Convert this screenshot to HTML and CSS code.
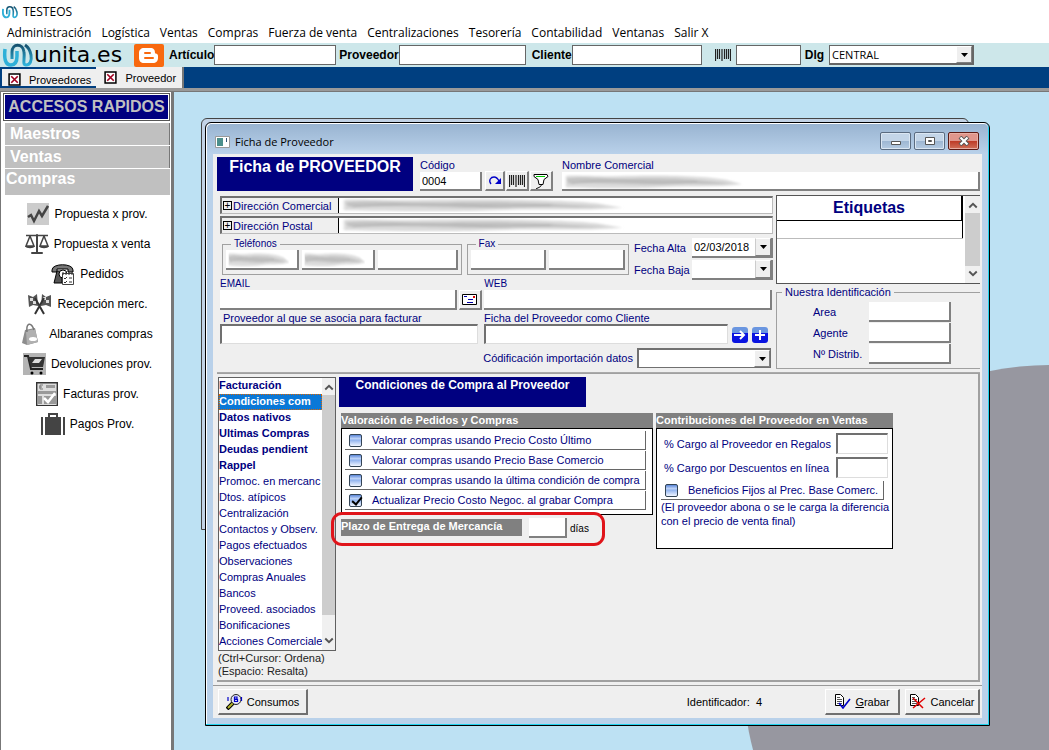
FILE: index.html
```html
<!DOCTYPE html>
<html lang="es">
<head>
    <meta charset="UTF-8">
    <title>TESTEOS</title>
    <link rel="stylesheet" href="styles.css">
</head>
<body>
<svg width="0" height="0" class="defs">
    <defs>
        <linearGradient id="gLogo" x1="0" y1="0" x2="0" y2="1">
            <stop offset="0" stop-color="#14506e"/>
            <stop offset="1" stop-color="#2fb4dc"/>
        </linearGradient>
        <filter id="soft" x="-5%" y="-20%" width="110%" height="140%"><feGaussianBlur stdDeviation="1"/></filter>
        <symbol id="logo" viewBox="0 0 30 24">
            <path d="M2 6c-1 9 0 16 6 16 5 0 6-4 6-9V8" fill="none" stroke="#2fb0d8" stroke-width="3.500"/>
            <path d="M9 16V9c0-9 11-9 12 0 1 7-2 13 2 13s6-4 5-10-3-8-6-10" fill="none" stroke="url(#gLogo)" stroke-width="3"/>
        </symbol>
        <symbol id="close" viewBox="0 0 12 12">
            <path d="M1 1h10v10H1z" fill="#fff" stroke="#000" stroke-width="1.400"/>
            <path d="M3 3l6 6M9 3l-6 6" stroke="#a00020" stroke-width="1.500"/>
        </symbol>
        <symbol id="bars" viewBox="0 0 16 12">
            <path d="M.5 0v12M2.500 0v10M4.500 0v10M7 0v12M9.500 0v10M11.500 0v10M13.500 0v10M15.500 0v12" stroke="#222" stroke-width="1.200"/>
        </symbol>
        <symbol id="down" viewBox="0 0 7 4"><path d="M0 0h7L3.500 4z"/></symbol>
        <symbol id="chevUp" viewBox="0 0 8 6"><path d="M1 5l3-3 3 3" fill="none" stroke="#555" stroke-width="1.500"/></symbol>
        <symbol id="chevDown" viewBox="0 0 8 6"><path d="M1 1l3 3 3-3" fill="none" stroke="#555" stroke-width="1.500"/></symbol>
        <symbol id="smudge" viewBox="0 0 200 16" preserveAspectRatio="none">
            <g filter="url(#soft)">
                <path d="M2 2c10-1 30 1 60 0s90-1 118 4l18 5c-30 4-60 1-90 3s-80 1-106 0z" fill="#dcdcdc"/>
                <path d="M3 5c20-3 40 1 70 0s60 0 80 2l34 3c-30 2-40-1-70 1s-60-2-112-1z" fill="#c2c2c2"/>
                <path d="M8 10c20-2 40-4 60-3s50 4 80 1" fill="none" stroke="#adadad"/>
            </g>
        </symbol>
    </defs>
</svg>

<header class="titlebar">
    <svg width="16" height="14"><use href="#logo"/></svg>
    <span>TESTEOS</span>
</header>
<nav class="menu">
    <a href="#">Administración</a>
    <a href="#">Logística</a>
    <a href="#">Ventas</a>
    <a href="#">Compras</a>
    <a href="#">Fuerza de venta</a>
    <a href="#">Centralizaciones</a>
    <a href="#">Tesorería</a>
    <a href="#">Contabilidad</a>
    <a href="#">Ventanas</a>
    <a href="#">Salir X</a>
</nav>

<div class="toolbar">
    <svg class="brand-mark" width="32" height="24"><use href="#logo"/></svg>
    <span class="brand">unita.es</span>
    <svg class="blogger" width="30" height="23" viewBox="0 0 30 23">
        <rect width="30" height="23" rx="2" fill="#f8690f"/>
        <path d="M10 4h6c4 0 5 2 5 5 0 1 3 0 3 3v2c0 3-2 5-5 5h-9c-3 0-5-2-5-5V9c0-3 2-5 5-5z" fill="#fff"/>
        <path d="M11 9h5M11 14h8" stroke="#f8690f" stroke-width="2" stroke-linecap="round"/>
    </svg>
    <label for="articulo">Artículo</label><input id="articulo" class="w-art">
    <label for="proveedor">Proveedor</label><input id="proveedor" class="w-prov">
    <label for="cliente">Cliente</label><input id="cliente" class="w-cli">
    <svg class="bars" width="16" height="12"><use href="#bars"/></svg>
    <input id="barras" class="w-bar" aria-label="Código de barras">
    <label for="dlg">Dlg</label>
    <div class="combo dlg">
        <select id="dlg"><option>CENTRAL</option></select>
        <span class="arrow"><svg width="7" height="4"><use href="#down"/></svg></span>
    </div>
</div>

<div class="tabs">
    <button class="tab"><svg width="13" height="13"><use href="#close"/></svg>Proveedores</button>
    <button class="tab active"><svg width="13" height="13"><use href="#close"/></svg>Proveedor</button>
</div>

<div class="work">
    <aside class="sidebar">
        <h1>ACCESOS RAPIDOS</h1>
        <button class="group">Maestros</button>
        <button class="group">Ventas</button>
        <button class="group open">Compras</button>
        <ul>
            <li><a href="#">
                <svg width="22" height="22" viewBox="0 0 22 22"><rect width="22" height="22" fill="#ccc"/><path d="M1 14l3-2 3 6 5-10 3 5 6-10" fill="none" stroke="#444" stroke-width="2.500"/></svg>
                Propuesta x prov.</a></li>
            <li><a href="#">
                <svg width="24" height="22" viewBox="0 0 24 22"><path d="M1 2.500h22M12 1v19M6 20h12M5 3L1 13h8L5 3M19 3l-4 10h8L19 3" fill="none" stroke="#444" stroke-width="1.500"/><path d="M0 13h10c-1 3-9 3-10 0M14 13h10c-1 3-9 3-10 0M7 19h10v2H7zM11 2h2v18h-2z" fill="#444"/></svg>
                Propuesta x venta</a></li>
            <li><a href="#">
                <svg width="24" height="22" viewBox="0 0 24 22"><path d="M1 7c0-7 21-7 21 0v2h-5V6H6v3H1z" fill="#777" stroke="#000"/><path d="M6 8l-3 12h8V8z" fill="#555" stroke="#000"/><circle cx="12" cy="11" r="4" fill="#fff" stroke="#000"/><path d="M11.500 10.500h11v11h-11z" fill="#fff" stroke="#444"/><path d="M12 9v3M15 9v3M18 9v3M21 9v3M13 15l1 1 2-2M18 15h3M13 19l1 1 2-2M18 19h3" fill="none" stroke="#333"/></svg>
                Pedidos</a></li>
            <li><a href="#">
                <svg width="25" height="22" viewBox="0 0 25 22"><path d="M1 2l5 2 4-3 1 12-5-1-4 2zM24 2l-5 2-4-3-1 12 5-1 5 2z" fill="#555"/><path d="M3 5h3v3H3zM6 8h3v3H6zM16 4h3v3h-3zM19 7h3v3h-3z" fill="#ddd"/><path d="M8 21l9-16M17 21L8 5" stroke="#333" stroke-width="2"/></svg>
                Recepción merc.</a></li>
            <li><a href="#">
                <svg class="bag" width="16" height="22" viewBox="0 0 16 22"><path d="M3 7l10-2 3 14-11 3-5-2z" fill="#8d8d8d"/><path d="M4 8l9-2 3 13-11 3z" fill="#b0b0b0"/><path d="M5 9c-1-9 4-11 7-2" fill="none" stroke="#777" stroke-width="1.500"/><ellipse cx="11" cy="16" rx="4" ry="2" fill="#fff"/></svg>
                Albaranes compras</a></li>
            <li><a href="#">
                <svg width="23" height="22" viewBox="0 0 23 22"><rect width="23" height="22" fill="#b4b4b4"/><path d="M1 3h4l3 13h12" fill="none" stroke="#222" stroke-width="2"/><path d="M5 4h17l-2 10H8z" fill="#333"/><path d="M9 10l3-4h7l-3 4z" fill="#ddd"/><circle cx="9" cy="20" r="1.500"/><circle cx="18" cy="20" r="1.500"/></svg>
                Devoluciones prov.</a></li>
            <li><a href="#">
                <svg width="22" height="24" viewBox="0 0 22 24"><path d="M.7.7h20.600v23H.7z" fill="#ddd" stroke="#333" stroke-width="1.400"/><path d="M10 3h9v3h-9zM2 9h18v3H2zM2 14h4v8H2zM8 14h12v8H8z" fill="#999"/><path d="M7 3H4v4h3M3 5h3" fill="none" stroke="#777"/><path d="M8 16l4 4 7-9" fill="none" stroke="#fff" stroke-width="2.500"/></svg>
                Facturas prov.</a></li>
            <li><a href="#">
                <svg width="24" height="22" viewBox="0 0 24 22"><path d="M0 4h2v18H0zM22 4h2v18h-2zM4 4h16v18H4z" fill="#444"/><path d="M8 5V1h8v4" fill="none" stroke="#444" stroke-width="2"/></svg>
                Pagos Prov.</a></li>
        </ul>
    </aside>

    <main class="desk">
        <div class="planet"></div>
        <div class="window-back"></div>
        <section class="window">
            <div class="caption">
                <svg width="15" height="12" viewBox="0 0 15 12"><path d="M.5.5h14v11H.5z" fill="#fff" stroke="#999"/><path d="M2 2h6v8H2z" fill="#4b8f8c"/><path d="M11.500 2v4" stroke="#357"/></svg>
                <h2>Ficha de Proveedor</h2>
                <button aria-label="Minimizar"><svg width="12" height="10" viewBox="0 0 12 10"><path d="M1.500 5.500h9v3h-9z" fill="#fff" stroke="#555"/></svg></button>
                <button aria-label="Maximizar"><svg width="12" height="10" viewBox="0 0 12 10"><path d="M1.500 1.500h9v7h-9z" fill="#fff" stroke="#555"/><path d="M4.500 4.500h3v1h-3z" stroke="#555" fill="none"/></svg></button>
                <button class="x" aria-label="Cerrar"><svg width="12" height="10" viewBox="0 0 12 10"><path d="M2 1l8 8M10 1L2 9" stroke="#555" stroke-width="4"/><path d="M2.500 1.500l7 7M9.500 1.500l-7 7" stroke="#fff" stroke-width="2.200"/></svg></button>
            </div>

            <form class="sheet">
                <div class="head">
                    <h3>Ficha de PROVEEDOR</h3>
                    <div class="field codigo">
                        <label for="codigo">Código</label>
                        <input id="codigo" class="flat" value="0004">
                    </div>
                    <button type="button" class="tool" aria-label="Recargar"><svg width="14" height="10" viewBox="0 0 14 10"><path d="M3 8C0 4 3 1 6 1c3 0 4 2 5 4" fill="none" stroke="#0000c8" stroke-width="1.300"/><path d="M13 2v6H7z" fill="#0000c8"/></svg></button>
                    <button type="button" class="tool wide" aria-label="Códigos de barras"><svg width="16" height="12"><use href="#bars"/></svg></button>
                    <button type="button" class="tool wide" aria-label="Lector"><svg width="18" height="16" viewBox="0 0 18 16"><path d="M2 1.500h13l1 2-4 3-1 5H7L6 6.500l-4-3z" fill="#fff" stroke="#000"/><path d="M4 3.500h9" stroke="#0c0"/><path d="M9 11c1 3-2 3-5 5" fill="none" stroke="#000"/></svg></button>
                    <div class="field nombre">
                        <label for="nombre">Nombre Comercial</label>
                        <div class="smudged"><input id="nombre" class="flat"><svg class="s-name"><use href="#smudge"/></svg></div>
                    </div>
                </div>

                <div class="columns">
                    <div class="left">
                        <div class="address">
                            <label for="dirc"><i>+</i>Dirección Comercial</label>
                            <div class="smudged"><input id="dirc"><svg class="s-addr"><use href="#smudge"/></svg></div>
                        </div>
                        <div class="address">
                            <label for="dirp"><i>+</i>Dirección Postal</label>
                            <div class="smudged"><input id="dirp"><svg class="s-addr"><use href="#smudge"/></svg></div>
                        </div>
                        <div class="phones">
                            <fieldset class="tel">
                                <legend>Teléfonos</legend>
                                <div class="inputs">
                                    <div class="smudged"><input class="flat" aria-label="Teléfono 1"><svg class="s-tel"><use href="#smudge"/></svg></div>
                                    <div class="smudged"><input class="flat" aria-label="Teléfono 2"><svg class="s-tel"><use href="#smudge"/></svg></div>
                                    <input class="flat" aria-label="Teléfono 3">
                                </div>
                            </fieldset>
                            <fieldset class="fax">
                                <legend>Fax</legend>
                                <div class="inputs">
                                    <input class="flat" aria-label="Fax 1">
                                    <input class="flat" aria-label="Fax 2">
                                </div>
                            </fieldset>
                            <div class="dates">
                                <label for="alta">Fecha Alta</label>
                                <div class="combo flat"><select id="alta"><option>02/03/2018</option></select><span class="arrow"><svg width="7" height="4"><use href="#down"/></svg></span></div>
                                <label for="baja">Fecha Baja</label>
                                <div class="combo flat"><select id="baja"><option></option></select><span class="arrow"><svg width="7" height="4"><use href="#down"/></svg></span></div>
                            </div>
                        </div>
                        <div class="line mail">
                            <div class="field half"><label for="email">EMAIL</label><input id="email" class="flat"></div>
                            <button type="button" class="tool wide" aria-label="Enviar correo"><svg width="16" height="12" viewBox="0 0 16 12"><path d="M.5.5h14v10H.5z" fill="#fff" stroke="#000"/><path d="M2 2.500h3M6 5.500h5M5 8.500h6" stroke="#00a"/><path d="M11 2h2v2h-2z" fill="#d00"/></svg></button>
                            <div class="field"><label for="web">WEB</label><input id="web" class="flat"></div>
                        </div>
                        <div class="line assoc">
                            <div class="field first"><label for="asocia">Proveedor al que se asocia para facturar</label><input id="asocia"></div>
                            <div class="field"><label for="comocli">Ficha del Proveedor como Cliente</label><input id="comocli"></div>
                            <button type="button" class="round" aria-label="Ir"><svg width="16" height="16" viewBox="0 0 16 16"><path d="M2 8h9M8 4l4 4-4 4" fill="none" stroke="#fff" stroke-width="2"/></svg></button>
                            <button type="button" class="round" aria-label="Añadir"><svg width="16" height="16" viewBox="0 0 16 16"><path d="M3 8h10M8 3v10" stroke="#fff" stroke-width="2"/></svg></button>
                        </div>
                        <div class="import">
                            <label for="codif">Códificación importación datos</label>
                            <div class="combo sunk"><select id="codif"><option></option></select><span class="arrow"><svg width="7" height="4"><use href="#down"/></svg></span></div>
                        </div>
                    </div>

                    <div class="right">
                        <div class="tags">
                            <table>
                                <thead><tr><th>Etiquetas</th></tr></thead>
                                <tbody><tr><td></td></tr></tbody>
                            </table>
                            <div class="scroll">
                                <svg width="10" height="8"><use href="#chevUp"/></svg>
                                <span></span>
                                <svg width="10" height="8"><use href="#chevDown"/></svg>
                            </div>
                        </div>
                        <fieldset class="ident">
                            <legend>Nuestra Identificación</legend>
                            <label for="area">Area</label><input id="area" class="flat">
                            <label for="agente">Agente</label><input id="agente" class="flat">
                            <label for="distrib">Nº Distrib.</label><input id="distrib" class="flat">
                        </fieldset>
                    </div>
                </div>

                <div class="detail">
                    <div class="sections">
                        <div class="listbox">
                            <ul>
                                <li><button type="button" class="b">Facturación</button></li>
                                <li><button type="button" class="b selected">Condiciones com</button></li>
                                <li><button type="button" class="b">Datos nativos</button></li>
                                <li><button type="button" class="b">Ultimas Compras</button></li>
                                <li><button type="button" class="b">Deudas pendient</button></li>
                                <li><button type="button" class="b">Rappel</button></li>
                                <li><button type="button">Promoc. en mercanc</button></li>
                                <li><button type="button">Dtos. atípicos</button></li>
                                <li><button type="button">Centralización</button></li>
                                <li><button type="button">Contactos y Observ.</button></li>
                                <li><button type="button">Pagos efectuados</button></li>
                                <li><button type="button">Observaciones</button></li>
                                <li><button type="button">Compras Anuales</button></li>
                                <li><button type="button">Bancos</button></li>
                                <li><button type="button">Proveed. asociados</button></li>
                                <li><button type="button">Bonificaciones</button></li>
                                <li><button type="button">Acciones Comerciale</button></li>
                            </ul>
                            <div class="scroll">
                                <svg width="10" height="8"><use href="#chevUp"/></svg>
                                <span></span>
                                <svg width="10" height="8"><use href="#chevDown"/></svg>
                            </div>
                        </div>
                        <p>(Ctrl+Cursor: Ordena)<br>(Espacio: Resalta)</p>
                    </div>

                    <div class="conditions">
                        <h4>Condiciones de Compra al Proveedor</h4>
                        <div class="boxes">
                            <div class="valor">
                                <h5>Valoración de Pedidos y Compras</h5>
                                <div class="box">
                                    <label class="check"><input type="checkbox">Valorar compras usando Precio Costo Último</label>
                                    <label class="check"><input type="checkbox">Valorar compras usando Precio Base Comercio</label>
                                    <label class="check"><input type="checkbox">Valorar compras usando la última condición de compra</label>
                                    <label class="check"><input type="checkbox" checked>Actualizar Precio Costo Negoc. al grabar Compra</label>
                                </div>
                                <div class="plazo">
                                    <label for="plazo">Plazo de Entrega de Mercancía</label>
                                    <input id="plazo" class="flat">
                                    <span>días</span>
                                </div>
                            </div>
                            <div class="contrib">
                                <h5>Contribuciones del Proveedor en Ventas</h5>
                                <div class="box">
                                    <div class="pct"><label for="regalos">% Cargo al Proveedor en Regalos</label><input id="regalos"></div>
                                    <div class="pct"><label for="dtos">% Cargo por Descuentos en línea</label><input id="dtos"></div>
                                    <label class="check"><input type="checkbox">Beneficios Fijos al Prec. Base Comerc.</label>
                                    <p>(El proveedor abona o se le carga la diferencia con el precio de venta final)</p>
                                </div>
                            </div>
                        </div>
                    </div>
                </div>

                <div class="footer">
                    <button type="button" class="push consumos"><svg width="17" height="17" viewBox="0 0 17 17"><path d="M1 16l6-6" stroke="#000" stroke-width="4"/><path d="M2 15l5-5" stroke="#b5b52a" stroke-width="2"/><circle cx="10" cy="6.500" r="5" fill="#e4e4f4" stroke="#222"/><path d="M8.500 4h2.500v2H8.500zM8.500 6.500h3v2h-3zM2 4v4M15.500 4v4" fill="none" stroke="#0000c8" stroke-width="1.200"/></svg>Consumos</button>
                    <span class="ident-no">Identificador:&nbsp; 4</span>
                    <button type="button" class="push"><svg width="17" height="15" viewBox="0 0 17 15"><path d="M1.500.5h5l3 3v8h-8z" fill="#fff" stroke="#000"/><path d="M3 3.500h3M3 5.500h5M3 7.500h5M3 9.500h5" stroke="#555"/><path d="M5 9l4 5 7-9" fill="none" stroke="#0000c8" stroke-width="1.600"/></svg><span><u>G</u>rabar</span></button>
                    <button type="button" class="push"><svg width="17" height="15" viewBox="0 0 17 15"><path d="M1.500.5h5l3 3v8h-8z" fill="#fff" stroke="#000"/><path d="M3 3.500h3M3 5.500h5M3 7.500h5M3 9.500h5" stroke="#555"/><path d="M4 4l10 10M16 4L4 14" stroke="#e00000" stroke-width="1.500"/></svg>Cancelar</button>
                </div>
            </form>
        </section>
    </main>
</div>
</body>
</html>
```
FILE: styles.css
```css
*{
    box-sizing: border-box;
    margin: 0px;
    padding: 0px;
}
body{
    min-height: 100vh;
    display: flex;
    flex-direction: column;
    background: #fff;
    font: 11px/14px "Liberation Sans", sans-serif;
    color: #000;
    overflow: hidden;
}
ul{
    list-style: none;
}
a{
    color: inherit;
    text-decoration: none;
}
button, input, select{
    font: inherit;
    color: inherit;
    border: none;
    border-radius: 0px;
}
input{
    min-width: 0px;
    width: 100%;
    height: 20px;
    background: #fff;
    padding: 0px 2px;
    color: #000;
}
svg{
    display: block;
    flex: none;
}
.defs{
    position: absolute;
}

/* top bars */
.titlebar{
    display: flex;
    align-items: center;
    gap: 5px;
    height: 24px;
    padding-left: 2px;
    font: 12px/16px "Open Sans", sans-serif;
}
.menu{
    display: flex;
    gap: 10px;
    height: 19px;
    padding-left: 7px;
    font: 12px/18px "Open Sans", sans-serif;
    white-space: nowrap;
}
.toolbar{
    display: flex;
    align-items: center;
    height: 24px;
    padding-left: 2px;
    background: #cde7ea;
    font-weight: bold;
}
.toolbar input{
    border: 1px solid #666;
}
.toolbar .brand{
    width: 97px;
    font: 22px/22px "DejaVu Sans", sans-serif;
}
.toolbar .blogger{
    margin: 0px 5px 0px 3px;
}
.toolbar label{
    font-size: 12px;
    white-space: nowrap;
}
.toolbar .w-art{
    width: 122px;
    margin-right: 3px;
}
.toolbar .w-prov{
    width: 127px;
    margin-right: 6px;
}
.toolbar .w-cli{
    width: 130px;
}
.toolbar .bars{
    margin: 0px 5px 0px 13px;
}
.toolbar .w-bar{
    width: 65px;
    margin-right: 4px;
}
.combo{
    display: flex;
    height: 20px;
    background: #fff;
}
.combo select{
    appearance: none;
    flex: 1;
    min-width: 0px;
    padding-left: 2px;
    background: transparent;
    color: #000;
}
.combo .arrow{
    display: flex;
    align-items: center;
    justify-content: center;
    width: 16px;
    background: #efefef;
    border: 1px solid #fff;
    border-right-color: #808080;
    border-bottom-color: #808080;
}
.combo.flat{
    border-right: 2px solid #808080;
    border-bottom: 2px solid #808080;
}
.combo.flat .arrow{
    border-left-color: #ccc;
}
.combo.sunk{
    border: 1px solid #707070;
    border-width: 2px 1px 1px 2px;
}
.combo.dlg{
    width: 145px;
    margin-left: 5px;
    border: 1px solid #666;
    border-width: 1px 2px 2px 1px;
    font: 11px/14px "Open Sans", sans-serif;
}
.tabs{
    display: flex;
    align-items: flex-start;
    height: 24px;
    padding-left: 2px;
    background: #003f80;
    border-bottom: 3px solid #999;
}
.tab{
    display: flex;
    align-items: center;
    gap: 8px;
    height: 17px;
    margin-top: 2px;
    padding: 4px 5px 0px 6px;
    background: #efefef;
}
.tab.active{
    height: 21px;
    margin-top: 0px;
    padding: 0px 6px 0px 8px;
    border-right: 2px solid #777;
}

.work{
    flex: 1;
    display: flex;
}

/* left panel */
.sidebar{
    width: 174px;
    padding: 2px 1px 0px 4px;
    border: 1px solid #777;
    border-width: 1px 3px 0px 1px;
}
.sidebar h1{
    height: 26px;
    margin: 0px 1px 3px -1px;
    border: 1px solid #fff;
    outline: 1px solid #555;
    background: #000080;
    color: #c0c0c0;
    text-align: center;
    font: bold 16px/24px "Liberation Sans", sans-serif;
    white-space: nowrap;
}
.sidebar .group{
    display: block;
    width: 100%;
    height: 22px;
    margin-bottom: 1px;
    padding-left: 5px;
    background: #c0c0c0;
    border-right: 1px solid #777;
    color: #fff;
    text-align: left;
    font: bold 16px/22px "Liberation Sans", sans-serif;
}
.sidebar .group.open{
    height: 26px;
    margin-bottom: 4px;
    padding: 0px 0px 6px 1px;
    border-right: none;
    line-height: 20px;
}
.sidebar li a{
    display: flex;
    align-items: center;
    justify-content: center;
    gap: 5px;
    height: 30px;
    font-size: 12px;
}
.sidebar .bag{
    margin-right: 6px;
}

/* desktop */
.desk{
    flex: 1;
    position: relative;
    overflow: hidden;
    background: #bde1f3;
    border-top: 1px solid #777;
}
.planet{
    position: absolute;
    left: 569px;
    top: 273px;
    width: 614px;
    height: 614px;
    border-radius: 50%;
    background: #9797a0;
}
.window-back{
    position: absolute;
    left: 27px;
    right: 80px;
    top: 26px;
    height: 412px;
    border: 1px solid #444;
    border-radius: 6px 6px 0px 0px;
    background: #c3d3e6;
}
.window{
    position: absolute;
    left: 31px;
    right: 59px;
    top: 30px;
    padding: 0px 7px 7px;
    border: 1px solid #000;
    border-radius: 6px 6px 0px 0px;
    box-shadow: inset -1px -1px 0px #22d3ee, inset 1px 1px 0px #fff;
    background: #b9d1ea;
}
.caption{
    display: flex;
    align-items: center;
    gap: 3px;
    height: 30px;
    margin: 1px -6px 0px;
    padding: 0px 9px 0px 8px;
    border-radius: 5px 5px 0px 0px;
    background: linear-gradient(#99b4d1, #b9d1ea);
}
.caption h2{
    flex: 1;
    margin-left: 2px;
    padding-top: 6px;
    font: 11px/16px "Open Sans", sans-serif;
}
.caption > svg{
    margin-top: 6px;
}
.caption button{
    display: flex;
    align-items: center;
    justify-content: center;
    width: 31px;
    height: 18px;
    margin-top: 4px;
    border: 1px solid #5a6b80;
    border-radius: 2px;
    background: linear-gradient(#c3d5e8 50%, #9db6d2 50%, #b5cbe2);
    box-shadow: inset 0px 0px 0px 1px #dbe7f3;
}
.caption button.x{
    border-color: #5c1a14;
    background: linear-gradient(#e0968c 50%, #bd3a26 50%, #d0705a);
    box-shadow: inset 0px 0px 0px 1px #e8b0a5;
}
.sheet{
    padding: 3px 2px 3px 4px;
    background: #efefef;
    color: #000080;
}

/* fields */
input.flat{
    border-right: 2px solid #808080;
    border-bottom: 2px solid #808080;
}
.field{
    display: flex;
    flex-direction: column;
    flex: 1;
}
.smudged{
    position: relative;
    flex: 1;
    display: flex;
}
.smudged svg{
    position: absolute;
    left: 2px;
    top: 2px;
    height: 15px;
}
.smudged .s-name{
    width: 180px;
}
.smudged .s-addr{
    width: 284px;
}
.smudged .s-tel{
    width: 62px;
}
.tool{
    display: flex;
    align-items: center;
    justify-content: center;
    width: 20px;
    height: 20px;
    background: #efefef;
    border: 1px solid #fff;
    border-right: 2px solid #808080;
    border-bottom: 2px solid #808080;
}
.tool.wide{
    width: 23px;
}
.head{
    display: flex;
    align-items: flex-end;
    height: 34px;
}
.head h3{
    align-self: stretch;
    width: 196px;
    margin-right: 7px;
    background: #000080;
    color: #fff;
    text-align: center;
    font: bold 16px/20px "Liberation Sans", sans-serif;
}
.head label{
    line-height: 13px;
}
.head input{
    height: 19px;
}
.head .codigo{
    flex: none;
    width: 62px;
    margin-right: 3px;
}
.head .tool{
    margin-right: 1px;
}
.head .nombre{
    margin-left: 8px;
}
.columns{
    display: flex;
    gap: 3px;
    height: 182px;
    padding-top: 4px;
    border-bottom: 1px solid #aaa;
}
.left{
    flex: 1;
    padding: 1px 0px 0px 3px;
}
.address{
    display: flex;
    height: 18px;
    margin-bottom: 2px;
    border: 1px solid #bbb;
    border-width: 2px 1px 1px 2px;
    border-top-color: #707070;
    border-left-color: #707070;
}
.address label{
    display: flex;
    align-items: center;
    gap: 1px;
    width: 117px;
    padding-left: 1px;
    border-right: 1px solid #000;
    white-space: nowrap;
}
.address i{
    width: 9px;
    height: 9px;
    border: 1px solid #000;
    color: #000;
    font: 10px/7px "Liberation Sans", sans-serif;
    text-align: center;
}
.address input{
    height: 15px;
}
.address .smudged svg{
    top: 0px;
    height: 14px;
}
.phones{
    display: flex;
    align-items: flex-start;
    padding-top: 2px;
}
fieldset{
    min-width: 0px;
    border: 1px solid #a0a0a0;
}
legend{
    margin-left: 5px;
    padding: 0px 3px;
    line-height: 14px;
}
.tel, .fax{
    height: 37px;
    padding: 0px 3px;
    font-size: 10px;
}
.tel legend, .fax legend{
    line-height: 12px;
}
.tel{
    flex: 3;
    margin: 0px 5px 0px 2px;
}
.fax{
    flex: 2;
    margin-right: 5px;
}
.phones .inputs{
    display: flex;
    gap: 3px;
}
.phones .inputs > *{
    flex: 1 1 0px;
    width: 0px;
}
.dates{
    display: grid;
    grid-template-columns: 58px 81px;
    gap: 2px 0px;
    align-items: center;
    white-space: nowrap;
}
.line{
    display: flex;
    align-items: flex-end;
}
.line label{
    height: 12px;
    line-height: 12px;
}
.mail{
    gap: 2px;
    margin: -2px 1px 0px 0px;
    font-size: 10px;
}
.mail .half{
    flex: none;
    width: 43%;
}
.assoc{
    gap: 4px;
    margin: 2px 5px 0px 0px;
}
.assoc .first{
    flex: none;
    width: 258px;
    margin-right: 2px;
}
.assoc .first label{
    padding-left: 3px;
}
.assoc input{
    border: 1px solid #ddd;
    border-width: 2px 1px 1px 2px;
    border-top-color: #707070;
    border-left-color: #707070;
}
.round{
    width: 16px;
    height: 16px;
    margin-bottom: 1px;
    border-radius: 3px;
    background: linear-gradient(#6a96e0 40%, #0a14e0 40%);
}
.import{
    display: flex;
    align-items: center;
    justify-content: flex-end;
    gap: 4px;
    margin: 4px 2px 0px 0px;
}
.import .combo{
    width: 134px;
}
.right{
    width: 204px;
}
.tags{
    display: flex;
    height: 89px;
    border: 1px solid #555;
    border-right: none;
    background: #fff;
}
.tags table{
    flex: 1;
    align-self: flex-start;
    border-collapse: collapse;
}
.tags th{
    height: 24px;
    border-right: 2px solid #000;
    border-bottom: 1px solid #000;
    font-size: 16px;
}
.tags td{
    height: 18px;
    border-right: 1px solid #000;
    border-bottom: 1px solid #bbb;
}
.scroll{
    display: flex;
    flex-direction: column;
    align-items: center;
    width: 15px;
    padding: 5px 0px;
    background: #f0f0f0;
}
.scroll span{
    flex: 1;
    align-self: stretch;
    margin: 4px 0px;
    background: #cdcdcd;
}
.tags .scroll{
    margin-left: 2px;
}
.ident{
    display: grid;
    grid-template-columns: 56px 82px;
    gap: 1px 0px;
    align-items: center;
    justify-content: end;
    margin-top: 1px;
    padding: 3px 29px 4px 0px;
    border-right: none;
}

/* detail */
.detail{
    display: flex;
    gap: 3px;
    height: 309px;
    padding: 3px 0px 0px 1px;
    border: 1px solid #a0a0a0;
    border-width: 1px 2px 2px 0px;
}
.sections{
    width: 118px;
    color: #222;
    line-height: 13px;
}
.listbox{
    display: flex;
    height: 274px;
    margin-bottom: 1px;
    border: 1px solid #606060;
    background: #fff;
}
.listbox ul{
    flex: 1;
    min-width: 0px;
}
.listbox button{
    display: block;
    width: 100%;
    height: 16px;
    padding-bottom: 2px;
    background: none;
    color: #000080;
    text-align: left;
    line-height: 14px;
    white-space: nowrap;
}
.listbox .b{
    font-weight: bold;
}
.listbox button.selected{
    background: #0a78d7;
    color: #fff;
    outline: 1px dotted #d60;
    outline-offset: -1px;
}
.listbox .scroll{
    width: 13px;
}
.listbox .scroll span{
    margin-bottom: 22px;
}
h4{
    width: 247px;
    height: 30px;
    margin-bottom: 6px;
    background: #000080;
    color: #fff;
    text-align: center;
    font-size: 12px;
    line-height: 16px;
}
h5{
    height: 15px;
    background: #808080;
    color: #fff;
    font-size: 11px;
    line-height: 15px;
    white-space: nowrap;
}
.boxes{
    display: flex;
    align-items: flex-start;
    gap: 3px;
    padding-left: 2px;
}
.valor{
    width: 312px;
}
.contrib{
    width: 237px;
}
.box{
    border: 1px solid #000;
    background: #fff;
}
.valor .box{
    display: grid;
    gap: 1px;
    align-content: start;
    height: 87px;
    padding: 2px 6px 0px 3px;
}
.check{
    display: flex;
    align-items: center;
    gap: 10px;
    height: 19px;
    padding-left: 4px;
    border-right: 1px solid #666;
    border-bottom: 1px solid #666;
    white-space: nowrap;
}
.check input{
    appearance: none;
    position: relative;
    width: 13px;
    height: 13px;
    border: 1px solid #345;
    border-radius: 2px;
    background: linear-gradient(#5a86d8, #c4d8fa 35%, #8fb2ee 45%, #f0f5ff);
}
.check input:checked::after{
    content: "";
    position: absolute;
    left: 4px;
    top: 0px;
    width: 4px;
    height: 8px;
    border: solid #000;
    border-width: 0px 2px 2px 0px;
    transform: rotate(40deg);
}
.plazo{
    display: flex;
    align-items: center;
    width: 274px;
    height: 34px;
    margin: -3px 0px 0px -10px;
    padding-left: 7px;
    position: relative;
    border: 3px solid #e0141a;
    border-radius: 11px;
    color: #000;
    font-size: 10px;
}
.plazo label{
    width: 181px;
    height: 17px;
    margin: 0px 7px 4px 0px;
    background: #808080;
    color: #fff;
    font-size: 11px;
    font-weight: bold;
    line-height: 15px;
}
.plazo input{
    width: 38px;
    margin: 0px 3px 3px 0px;
}
.contrib .box{
    height: 121px;
    padding: 4px 4px 0px;
}
.pct{
    display: flex;
    align-items: center;
    justify-content: space-between;
    margin-bottom: 3px;
    padding-left: 3px;
}
.pct input{
    width: 52px;
    height: 21px;
    border: 1px solid #ddd;
    border-width: 2px 1px 1px 2px;
    border-top-color: #707070;
    border-left-color: #707070;
}
.contrib .check{
    margin: 2px 4px 0px 0px;
}
.contrib p{
    margin-right: -4px;
}

.footer{
    display: flex;
    align-items: center;
    gap: 5px;
    margin: 3px -2px 0px -4px;
    padding: 3px 2px 0px 5px;
    border-top: 1px solid #999;
    color: #000;
}
.push{
    display: flex;
    align-items: center;
    justify-content: center;
    gap: 4px;
    width: 75px;
    height: 26px;
    background: #efefef;
    border: 1px solid #fff;
    border-right: 2px solid #707070;
    border-bottom: 2px solid #707070;
}
.push.consumos{
    width: 90px;
}
.footer .ident-no{
    margin: 0px 58px 0px auto;
}
```
